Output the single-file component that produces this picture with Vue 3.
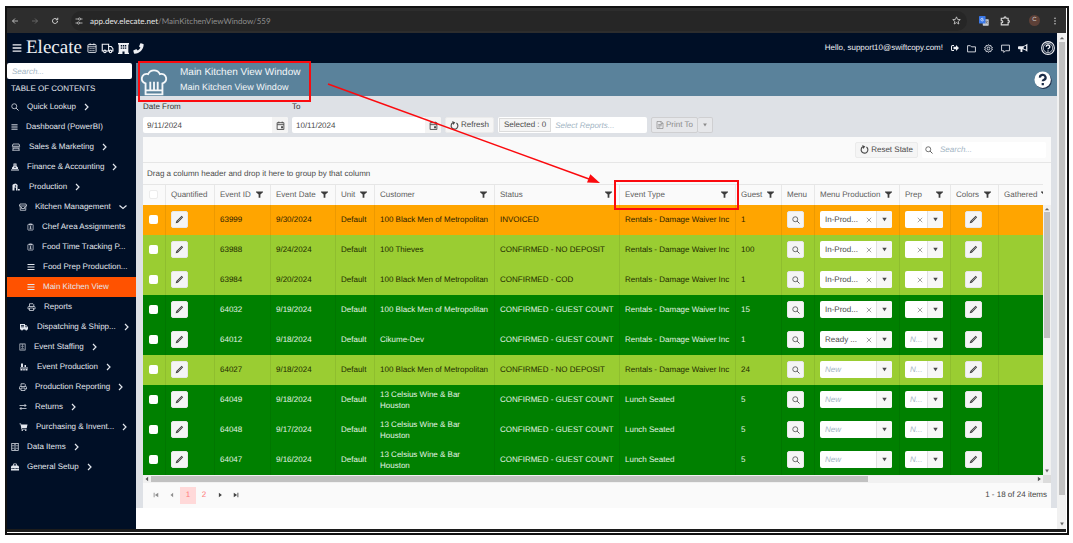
<script setup>
import { h } from 'vue'

const icons = {
  back: '<path d="M14 8H3M8 3L3 8l5 5"/>',
  forward: '<path d="M2 8h11M8 3l5 5-5 5"/>',
  reload: '<path d="M13 8a5 5 0 1 1-1.500-3.600M13.500 1.500v4h-4" stroke-width="2"/>',
  tune: '<path d="M1 4h5M12 4h3M1 12h3M10 12h5"/><circle cx="9" cy="4" r="2.200"/><circle cx="7" cy="12" r="2.200"/>',
  star: '<path d="M8 1.500l1.900 4.500 4.800.400-3.700 3.100 1.200 4.800L8 11.700l-4.200 2.600L5 9.500 1.300 6.400 6.100 6z" stroke-width="1.400"/>',
  translate: '<rect x="6" y="5" width="9.500" height="10.500" rx="1" fill="#c9cdd2" stroke="none"/><rect x="0" y="0" width="10.500" height="12" rx="1" fill="#3b78e7" stroke="none"/><path d="M7 5.500H5M7.200 6.500a2.200 2.200 0 1 1-.500-2.200" stroke="#fff" stroke-width="1"/><path d="M10 8.500h4M12 7.500v1M13.500 8.500c-.500 2-1.500 3-3 4M11 9.500c.600 1.400 1.500 2.200 3 3" stroke="#555" stroke-width=".8"/>',
  puzzle: '<path d="M2 3.500h4.500V3a1.600 1.600 0 0 1 3.200 0v.500H13V7h.400a1.600 1.600 0 0 1 0 3.200H13v4H2v-3.500h.800a1.600 1.600 0 0 0 0-3.400H2z" stroke-width="1.800"/>',
  dots: '<g fill="currentColor" stroke="none"><circle cx="8" cy="2.500" r="1.500"/><circle cx="8" cy="8" r="1.500"/><circle cx="8" cy="13.500" r="1.500"/></g>',
  bars: '<path d="M1 3h14M1 8h14M1 13h14" stroke-width="2.200"/>',
  calendar: '<rect x="1.500" y="2.500" width="13" height="12.500" rx="1"/><path d="M1.500 6h13M5 .500v3M11 .500v3M4 9h2M7 9h2M10 9h2M4 12h2M7 12h2M10 12h2" stroke-width="1.300"/>',
  van: '<path d="M3 12H1V3h8.500v9H6M9.500 6H13l2.200 3v3H14M9.500 12h1"/><circle cx="4.500" cy="12.500" r="1.600"/><circle cx="12" cy="12.500" r="1.600"/>',
  building: '<path fill="currentColor" stroke="none" fill-rule="evenodd" d="M0 0h16v2h-1v12h1v2H9.500v-3.500h-3V16H0v-2h1V2H0zM4 3v2h2V3zM7 3v2h2V3zM10 3v2h2V3zM4 6.500v2h2v-2zM7 6.500v2h2v-2zM10 6.500v2h2v-2z"/>',
  phone: '<path fill="currentColor" stroke="none" d="M11.500.500l3.400.900c.400.100.600.400.600.800C15.500 9.500 9.500 15.500 2.200 15.500c-.400 0-.700-.200-.800-.600l-.900-3.400c-.100-.400.100-.800.500-1l3.500-1.500c.400-.100.800 0 1 .300l1.400 1.700a11.500 11.500 0 0 0 4-4L9.200 5.600c-.300-.300-.400-.700-.300-1l1.600-3.600c.200-.400.600-.600 1-.500z"/>',
  logout: '<path fill="currentColor" stroke="none" d="M6 2H3a3 3 0 0 0-3 3v6a3 3 0 0 0 3 3h3v-2H3a1 1 0 0 1-1-1V5a1 1 0 0 1 1-1h3zM16 8l-6-6v3.500H5v5h5V14z"/>',
  folder: '<path d="M1 3h5l2 2h7v9H1z"/>',
  gear: '<circle cx="8" cy="8" r="2.500"/><path d="M8 1l1.500 2.200 2.600-.700.400 2.600 2.500 1.100L13.800 8l1.200 1.900-2.500 1.100-.400 2.600-2.600-.700L8 15l-1.500-2.100-2.600.700-.400-2.600L1 9.900 2.200 8 1 6.200l2.500-1.100.400-2.600 2.600.700z"/>',
  comment: '<path d="M1 2h14v10H8l-3 3v-3H1z"/>',
  horn: '<path fill="currentColor" stroke="none" fill-rule="evenodd" d="M15 1v13l-4-3-4-1v4.500H4V10H1.500A1.500 1.500 0 0 1 0 8.500v-2A1.500 1.500 0 0 1 1.500 5H7l4-1.200zM9 6v3l4 1.500V4.500z"/>',
  question: '<circle cx="8" cy="8" r="7.300" stroke-width="1.200"/><circle cx="8" cy="8" r="5.400" stroke-width=".9"/><path d="M6 6.600a2 2 0 1 1 2.700 1.800c-.500.200-.700.500-.700 1.100M8 10.800v1.200" stroke-width="1.700"/>',
  helpSolid: '<circle cx="8.500" cy="8.600" r="7.300" fill="#20304c" stroke="none"/><circle cx="7.700" cy="7.700" r="7.300" fill="#fff" stroke="none"/><path d="M5.300 5.900a2.500 2.300 0 1 1 3.500 2c-.800.300-1 .600-1 1.300M7.800 10.600v2" stroke="#1c2c47" stroke-width="2"/>',
  chef: '<path d="M3 8.500C1.300 8 .600 6.700.800 5.300 1.100 3.500 2.800 2.500 4.500 3 5.200 1.500 6.500.800 8 .800s2.800.700 3.500 2.200c1.700-.500 3.400.500 3.700 2.300.200 1.400-.500 2.700-2.200 3.200V15H3zM3 12.700h10M5.800 7.500v5M8 7.500v5M10.200 7.500v5" stroke-width="1.100"/>',
  search: '<circle cx="6.500" cy="6.500" r="5"/><path d="M10.200 10.200L15 15" stroke-width="1.800"/>',
  store: '<path d="M2 2h12l1.500 4.500H.500zM2 7v7.500M14 7v7.500M.500 14.500h15M2 10.500h12M6 7v3M10 7v3"/>',
  money: '<path fill="currentColor" stroke="none" d="M5 1h6v5l3 3v3H2V9l3-3zM0 13h16v2H0z"/><path d="M6.500 4h3M6 8.500h4" stroke="#000f26"/>',
  production: '<path fill="currentColor" stroke="none" d="M1 7a4 4 0 0 1 3-5 4 4 0 0 1 5 0 4 4 0 0 1 2 5v8H8V9H5v6H1zM12 12h3.500v3H12z"/><circle cx="7" cy="6" r="1.500" fill="#000f26" stroke="none"/>',
  shop: '<path d="M2 2h12l1.500 4H.500zM2.500 6v8.500h11V6M5 8v3h6V8"/>',
  clipboard: '<rect x="2" y="2" width="12" height="13" rx="1"/><path d="M5.500 1h5v2.500h-5zM8 6v6M5.500 12h5M6 8h4"/>',
  printer: '<path d="M4 7V1.500h7l1.500 1.500v4M3.500 12H1V8.500a1.500 1.500 0 0 1 1.500-1.500h11a1.500 1.500 0 0 1 1.500 1.500V12h-2.500M4 10h8v5H4z"/>',
  truck: '<path fill="currentColor" stroke="none" fill-rule="evenodd" d="M0 2h10v2.500h3l3 4V13h-1.500a2 2 0 0 1-4 0H6a2 2 0 0 1-4 0H0zM2 4v1.300h6V4zM2 7v1.300h6V7zM11 6v2.500h3L12.400 6z"/>',
  badge: '<rect x="2" y="1" width="12" height="14"/><circle cx="8" cy="7" r="1.600"/><path d="M5 12h6M6 3h4"/>',
  people: '<g fill="currentColor" stroke="none"><path d="M2 1h4v7H2zM9 4h3v4H9z"/><path d="M0 9h16v2H0zM1 12h4v3H1zM6.500 12h3v3h-3zM11 12h4v3h-4z"/></g>',
  swap: '<path d="M1 5h13M11 2l3 3-3 3M15 11H2M5 8l-3 3 3 3"/>',
  cart: '<path fill="currentColor" stroke="none" d="M0 1h3l.500 2H16l-1.500 7H5l.300 1.500H14V13H4L2 2.500H0z"/><circle cx="5.500" cy="14.300" r="1.500" fill="currentColor" stroke="none"/><circle cx="12.500" cy="14.300" r="1.500" fill="currentColor" stroke="none"/>',
  cabinet: '<rect x="1.500" y="1" width="13" height="14"/><path d="M1.500 5.500h13M1.500 10.500h13M6 3.300h4M6 8h4M6 12.800h4" stroke-width="1.200"/>',
  toolbox: '<path fill="currentColor" stroke="none" fill-rule="evenodd" d="M4 5V2.500L5.500 1h5L12 2.500V5h2l2 2.500V10H0V7.500L2 5zM5.500 5h5V2.500h-5zM0 11h3.500v1.200h1.500V11h6v1.200h1.500V11H16v4H0z"/>',
  right: '<path d="M2 2l6 6-6 6" stroke-width="2.400"/>',
  down: '<path d="M1 5l7 6 7-6" stroke-width="2.400"/>',
  picker: '<path d="M2 3h12v12H2zM2 6.500h12M5 1v3M11 1v3" stroke-width="1.600"/><path d="M9 9.500h3.500v3.500H9z" fill="currentColor" stroke="none"/>',
  refresh: '<path d="M11.500 3.500A6 6 0 1 1 5 3.200" stroke-width="2"/><path d="M4 0l5.500 2.500L5.500 7z" fill="currentColor" stroke="none"/>',
  report: '<path d="M2 1h8.500L14 4.500V15H2zM10 1v4h4M4.500 7h7M4.500 9.500h7M4.500 12h4" stroke-width="1.400"/>',
  caret: '<path d="M3 4h10l-5 8z" fill="currentColor" stroke="none"/>',
  filter: '<path d="M0 1h16v2l-6 5v7.500H6V8L0 3z" fill="currentColor" stroke="none"/>',
  pencil: '<path d="M1.200 14.800l1.200-4L11.800 1.500l2.700 2.700L5.200 13.600z" fill="currentColor" stroke="none"/><path d="M10 3l3 3M4.500 11.500L10.500 5.500" stroke="#f6f6f6" stroke-width=".8"/>',
  close: '<path d="M2 2l12 12M14 2L2 14" stroke-width="1.800"/>',
  triUp: '<path d="M2 11h12L8 5z" fill="currentColor" stroke="none"/>',
  triLeft: '<path d="M11 2v12L4 8z" fill="currentColor" stroke="none"/>',
  triRight: '<path d="M5 2v12l8-6z" fill="currentColor" stroke="none"/>',
  first: '<path d="M14 2v12L5 8z" fill="currentColor" stroke="none"/><path d="M3 2v12" stroke-width="2.400"/>',
  last: '<path d="M2 2v12l9-6z" fill="currentColor" stroke="none"/><path d="M13 2v12" stroke-width="2.400"/>',
}

const Icon = (props) =>
  h('svg', {
    width: props.size,
    height: props.tall || props.size,
    viewBox: '0 0 16 16',
    fill: 'none',
    stroke: 'currentColor',
    'stroke-width': 1.5,
    'aria-hidden': 'true',
    innerHTML: icons[props.name],
  })
Icon.props = ['name', 'size', 'tall']

const menu = [
  { text: 'Quick Lookup', icon: 'search', size: 8, level: 0, arrow: 'right' },
  { text: 'Dashboard (PowerBI)', icon: 'bars', size: 7, level: 0 },
  { text: 'Sales & Marketing', icon: 'store', size: 10, level: 0, arrow: 'right' },
  { text: 'Finance & Accounting', icon: 'money', size: 8, level: 0, arrow: 'right' },
  { text: 'Production', icon: 'production', size: 10, level: 0, arrow: 'right' },
  { text: 'Kitchen Management', icon: 'shop', size: 8, level: 1, arrow: 'down' },
  { text: 'Chef Area Assignments', icon: 'clipboard', size: 7, level: 2 },
  { text: 'Food Time Tracking P...', icon: 'clipboard', size: 7, level: 2 },
  { text: 'Food Prep Production...', icon: 'bars', size: 8, level: 2 },
  { text: 'Main Kitchen View', icon: 'bars', size: 8, level: 2, active: true },
  { text: 'Reports', icon: 'printer', size: 9, level: 2 },
  { text: 'Dispatching & Shipp...', icon: 'truck', size: 10, level: 1, arrow: 'right' },
  { text: 'Event Staffing', icon: 'badge', size: 7, level: 1, arrow: 'right' },
  { text: 'Event Production', icon: 'people', size: 10, level: 1, arrow: 'right' },
  { text: 'Production Reporting', icon: 'printer', size: 8, level: 1, arrow: 'right' },
  { text: 'Returns', icon: 'swap', size: 8, level: 1, arrow: 'right' },
  { text: 'Purchasing & Invent...', icon: 'cart', size: 9, level: 1, arrow: 'right' },
  { text: 'Data Items', icon: 'cabinet', size: 8, level: 0, arrow: 'right' },
  { text: 'General Setup', icon: 'toolbox', size: 8, level: 0, arrow: 'right' },
]

const columns = [
  { key: 'check', title: '' },
  { key: 'quantified', title: 'Quantified' },
  { key: 'id', title: 'Event ID', filter: true },
  { key: 'date', title: 'Event Date', filter: true },
  { key: 'unit', title: 'Unit', filter: true },
  { key: 'customer', title: 'Customer', filter: true },
  { key: 'status', title: 'Status', filter: true },
  { key: 'type', title: 'Event Type', filter: true },
  { key: 'guest', title: 'Guest', filter: true },
  { key: 'menu', title: 'Menu' },
  { key: 'mprod', title: 'Menu Production', filter: true },
  { key: 'prep', title: 'Prep', filter: true },
  { key: 'colors', title: 'Colors', filter: true },
  { key: 'gathered', title: 'Gathered', filter: true },
]

const metro = '100 Black Men of Metropolitan'
const houston = '13 Celsius Wine & Bar\nHouston'
const waiver = 'Rentals - Damage Waiver Inc'
const guestCount = 'CONFIRMED - GUEST COUNT'
const rows = [
  { tone: 'orange', id: '63999', date: '9/30/2024', customer: metro, status: 'INVOICED', type: waiver, guest: 1, mprod: 'In-Prod...', prep: '' },
  { tone: 'lime', id: '63988', date: '9/24/2024', customer: '100 Thieves', status: 'CONFIRMED - NO DEPOSIT', type: waiver, guest: 100, mprod: 'In-Prod...', prep: '' },
  { tone: 'lime', id: '63984', date: '9/20/2024', customer: metro, status: 'CONFIRMED - COD', type: waiver, guest: 1, mprod: 'In-Prod...', prep: '' },
  { tone: 'green', id: '64032', date: '9/19/2024', customer: metro, status: guestCount, type: waiver, guest: 15, mprod: 'In-Prod...', prep: '' },
  { tone: 'green', id: '64012', date: '9/18/2024', customer: 'Cikume-Dev', status: guestCount, type: waiver, guest: 1, mprod: 'Ready ...', prep: null },
  { tone: 'lime', id: '64027', date: '9/18/2024', customer: metro, status: 'CONFIRMED - NO DEPOSIT', type: waiver, guest: 24, mprod: null, prep: null },
  { tone: 'green', id: '64049', date: '9/18/2024', customer: houston, status: guestCount, type: 'Lunch Seated', guest: 5, mprod: null, prep: null },
  { tone: 'green', id: '64048', date: '9/17/2024', customer: houston, status: guestCount, type: 'Lunch Seated', guest: 5, mprod: null, prep: null },
  { tone: 'green', id: '64047', date: '9/16/2024', customer: houston, status: guestCount, type: 'Lunch Seated', guest: 5, mprod: null, prep: null },
]
</script>

<template>
  <div class="page">
    <div class="frame">
      <div class="chrome">
        <button class="ghost" aria-label="Back"><Icon name="back" size="8" /></button>
        <button class="ghost dim" aria-label="Forward"><Icon name="forward" size="8" /></button>
        <button class="ghost" aria-label="Reload"><Icon name="reload" size="8" /></button>
        <div class="address">
          <Icon name="tune" size="8" />
          <span class="url"><b>app.dev.elecate.net</b>/MainKitchenViewWindow/559</span>
          <button class="ghost" aria-label="Bookmark"><Icon name="star" size="9" /></button>
        </div>
        <div class="chrome-tools">
          <button class="ghost" aria-label="Translate"><Icon name="translate" size="10" /></button>
          <button class="ghost" aria-label="Extensions"><Icon name="puzzle" size="10" /></button>
          <span class="avatar">C</span>
          <button class="ghost" aria-label="Menu"><Icon name="dots" size="8" /></button>
        </div>
      </div>

      <div class="window">
        <div class="app">
          <header class="topbar">
            <button class="ghost" aria-label="Toggle menu"><Icon name="bars" size="10" /></button>
            <span class="logo">Elecate</span>
            <div class="shortcuts">
              <button class="ghost" aria-label="Calendar"><Icon name="calendar" size="10" /></button>
              <button class="ghost" aria-label="Deliveries"><Icon name="van" size="13" tall="12" /></button>
              <button class="ghost" aria-label="Venue"><Icon name="building" size="11" /></button>
              <button class="ghost" aria-label="Call"><Icon name="phone" size="11" /></button>
            </div>
            <div class="account">
              <span>Hello, support10@swiftcopy.com!</span>
              <button class="ghost" aria-label="Log out"><Icon name="logout" size="8" /></button>
              <button class="ghost" aria-label="Files"><Icon name="folder" size="9" /></button>
              <button class="ghost" aria-label="Settings"><Icon name="gear" size="9" /></button>
              <button class="ghost" aria-label="Messages"><Icon name="comment" size="9" /></button>
              <button class="ghost" aria-label="Announcements"><Icon name="horn" size="10" /></button>
              <button class="ghost about" aria-label="About"><Icon name="question" size="14" /></button>
            </div>
          </header>

          <div class="body">
            <nav class="sidebar">
              <input class="side-search" type="text" placeholder="Search..." aria-label="Search menu" />
              <h2>TABLE OF CONTENTS</h2>
              <ul>
                <li v-for="item in menu" :key="item.text">
                  <a href="#" :class="['level' + item.level, { active: item.active }]">
                    <Icon :name="item.icon" :size="item.size" tall="8" />
                    <span>{{ item.text }}</span>
                    <Icon v-if="item.arrow" :name="item.arrow" size="8" />
                  </a>
                </li>
              </ul>
            </nav>

            <main>
              <div class="title">
                <Icon class="hat" name="chef" size="28" tall="27" />
                <div class="title-text">
                  <h1>Main Kitchen View Window</h1>
                  <p>Main Kitchen View Window</p>
                </div>
                <button class="ghost" aria-label="Help"><Icon name="helpSolid" size="18" /></button>
              </div>

              <div class="content">
                <div class="filters">
                  <div class="field">
                    <label for="from">Date From</label>
                    <div class="box">
                      <input id="from" type="text" value="9/11/2024" />
                      <button aria-label="Pick start date"><Icon name="picker" size="9" /></button>
                    </div>
                  </div>
                  <div class="field to">
                    <label for="to">To</label>
                    <div class="box">
                      <input id="to" type="text" value="10/11/2024" />
                      <button aria-label="Pick end date"><Icon name="picker" size="9" /></button>
                    </div>
                  </div>
                  <button class="btn refresh"><Icon name="refresh" size="9" />Refresh</button>
                  <div class="box reports">
                    <span class="chip">Selected : 0</span>
                    <input type="text" placeholder="Select Reports..." aria-label="Select reports" />
                  </div>
                  <div class="split">
                    <button class="btn" disabled><Icon name="report" size="8" />Print To</button>
                    <button class="btn" disabled aria-label="Print options"><Icon name="caret" size="6" /></button>
                  </div>
                </div>

                <section class="grid">
                  <div class="grid-tools">
                    <button class="btn"><Icon name="refresh" size="9" />Reset State</button>
                    <div class="box grid-search">
                      <Icon name="search" size="8" />
                      <input type="text" placeholder="Search..." aria-label="Search events" />
                    </div>
                  </div>
                  <p class="group">Drag a column header and drop it here to group by that column</p>
                  <div class="rows">
                    <table>
                      <colgroup>
                        <col v-for="c in columns" :key="c.key" :class="'w-' + c.key" />
                      </colgroup>
                      <thead>
                        <tr>
                          <th v-for="c in columns" :key="c.key" scope="col">
                            <input v-if="c.key === 'check'" type="checkbox" aria-label="Select all" />
                            <div v-else class="head">
                              <span>{{ c.title }}</span>
                              <Icon v-if="c.filter" name="filter" size="7" />
                            </div>
                          </th>
                        </tr>
                      </thead>
                      <tbody>
                        <tr v-for="r in rows" :key="r.id" :class="r.tone">
                          <td><input type="checkbox" :aria-label="'Select event ' + r.id" /></td>
                          <td><button class="square" aria-label="Edit quantities"><Icon name="pencil" size="9" /></button></td>
                          <td>{{ r.id }}</td>
                          <td>{{ r.date }}</td>
                          <td>Default</td>
                          <td>{{ r.customer }}</td>
                          <td>{{ r.status }}</td>
                          <td>{{ r.type }}</td>
                          <td>{{ r.guest }}</td>
                          <td><button class="square" aria-label="View menu"><Icon name="search" size="8" /></button></td>
                          <td v-for="k in ['mprod', 'prep']" :key="k">
                            <div :class="['combo', { empty: r[k] === null }]">
                              <select :aria-label="k === 'prep' ? 'Prep' : 'Menu production'">
                                <option>{{ r[k] === null ? (k === 'prep' ? 'N...' : 'New') : r[k] }}</option>
                              </select>
                              <button v-if="r[k] !== null" class="clear" aria-label="Clear"><Icon name="close" size="6" /></button>
                              <span class="drop"><Icon name="caret" size="7" /></span>
                            </div>
                          </td>
                          <td class="mid"><button class="square" aria-label="Edit colors"><Icon name="pencil" size="9" /></button></td>
                          <td></td>
                        </tr>
                      </tbody>
                    </table>
                    <div class="vscroll inner">
                      <Icon name="triUp" size="6" />
                      <div class="thumb"></div>
                      <Icon name="caret" size="6" />
                    </div>
                  </div>
                  <div class="hscroll">
                    <Icon name="triLeft" size="6" />
                    <div class="hthumb"></div>
                    <Icon name="triRight" size="6" />
                    <span class="corner"></span>
                  </div>
                  <div class="pager">
                    <button class="off" aria-label="First page"><Icon name="first" size="6" /></button>
                    <button class="off" aria-label="Previous page"><Icon name="triLeft" size="6" /></button>
                    <button class="num current">1</button>
                    <button class="num">2</button>
                    <button aria-label="Next page"><Icon name="triRight" size="6" /></button>
                    <button aria-label="Last page"><Icon name="last" size="6" /></button>
                    <span class="count">1 - 18 of 24 items</span>
                  </div>
                </section>
              </div>
            </main>
          </div>
        </div>
        <div class="vscroll outer">
          <Icon name="triUp" size="6" />
          <div class="thumb"></div>
          <Icon name="caret" size="6" />
        </div>
      </div>
      <div class="taskbar"></div>
    </div>

    <svg class="notes" width="610" height="155" viewBox="0 0 610 155" aria-hidden="true">
      <g fill="none" stroke="#fb0a0e" stroke-width="2">
        <rect x="2" y="2" width="171" height="39" />
        <rect x="478" y="121" width="123" height="28" />
        <path d="M191 24L452 119" stroke-width="1.500" />
      </g>
      <path d="M463 123l-13-.5 3.300-8.300z" fill="#fb0a0e" />
    </svg>
  </div>
</template>

<style>
body {
  background: #fff;
}
</style>

<style scoped>
.page {
  position: relative;
  padding: 6px 4px 8px 5px;
  font: 8px/12px "Liberation Sans", Arial, sans-serif;
  text-rendering: geometricPrecision;
  color: #4a4a4a;
}
.page * {
  box-sizing: border-box;
}
svg {
  display: block;
  flex: none;
}
button,
input,
select {
  font: inherit;
  color: inherit;
  text-rendering: inherit;
  margin: 0;
  padding: 0;
  border: 0;
  background: none;
  min-width: 0;
}
input:focus,
select:focus {
  outline: none;
}
h1,
h2,
p,
ul {
  margin: 0;
  padding: 0;
  font-weight: normal;
}
.frame {
  border: 2px solid #111;
  padding: 0 1px 1px 0;
  background: #fff;
}
.chrome {
  display: flex;
  align-items: center;
  height: 25px;
  padding: 0 7px 0 4px;
  gap: 12px;
  background: #2d2d2d;
  color: #d9d9d9;
}
.chrome .dim {
  color: #777;
}
.address {
  flex: 1;
  display: flex;
  align-items: center;
  gap: 7px;
  height: 20px;
  padding: 0 6px 0 4px;
  border-radius: 10px;
  background: #262626;
}
.url {
  flex: 1;
  font: 8px/12px Lato, "Open Sans", sans-serif;
  color: #8d8d8d;
}
.url b {
  font-weight: 500;
  color: #dedede;
}
.chrome-tools {
  display: flex;
  align-items: center;
  gap: 11px;
}
.avatar {
  width: 11px;
  margin-left: 8px;
  border-radius: 50%;
  background: #5d4037;
  font-size: 6px;
  line-height: 11px;
  text-align: center;
}
.window {
  display: flex;
}
.app {
  flex: 1;
  min-width: 0;
  display: flex;
  flex-direction: column;
}
.topbar {
  display: flex;
  align-items: center;
  height: 30px;
  padding: 0 2px 0 5px;
  gap: 4px;
  background: #000f26;
  color: #eef0f4;
}
.logo {
  font: 19px/24px "Liberation Serif", "Times New Roman", serif;
}
.shortcuts {
  display: flex;
  align-items: center;
  gap: 4px;
  margin-left: 1px;
}
.account {
  display: flex;
  align-items: center;
  gap: 8px;
  margin-left: auto;
}
.account .about {
  margin-left: 5px;
}
.body {
  flex: 1;
  display: flex;
}
.sidebar {
  width: 129px;
  flex: none;
  background: #000f26;
  color: #e3e7ee;
}
.side-search {
  display: block;
  width: 125px;
  height: 16px;
  padding: 0 5px;
  border-radius: 2px;
  background: #fff;
}
::placeholder {
  color: #a3b5c4;
  font-style: italic;
  opacity: 1;
}
.sidebar h2 {
  padding: 4px 4px 2px;
  font-size: 8px;
  line-height: 12px;
}
.sidebar ul {
  list-style: none;
}
.sidebar a {
  display: flex;
  align-items: center;
  gap: 8px;
  height: 20px;
  color: inherit;
  text-decoration: none;
  white-space: nowrap;
}
.level0 {
  padding-left: 4px;
}
.level1 {
  padding-left: 12px;
}
.level2 {
  padding-left: 20px;
}
.sidebar .active {
  background: #ff5200;
}
main {
  flex: 1;
  min-width: 0;
  background: #fff;
  padding-bottom: 21px;
}
.title {
  display: flex;
  align-items: center;
  height: 33px;
  padding: 0 5px 0 4px;
  gap: 12px;
  background: #5a829b;
  color: #f4f7f9;
}
.hat {
  align-self: flex-end;
}
.title-text {
  flex: 1;
}
.title h1 {
  font-size: 10px;
  line-height: 14px;
}
.title p {
  font-size: 9px;
  line-height: 14px;
}
.content {
  padding: 5px 6px 0 7px;
  background: #dee1e6;
}
.filters {
  display: flex;
  align-items: flex-end;
  gap: 4px;
  padding-bottom: 4px;
}
.field {
  width: 145px;
}
.field.to {
  width: 149px;
}
.field label {
  display: block;
  margin-bottom: 4px;
  color: #333;
}
.box {
  display: flex;
  align-items: center;
  height: 16px;
  border-radius: 2px;
  background: #fff;
  overflow: hidden;
}
.box input {
  flex: 1;
  height: 16px;
  padding: 0 4px;
}
.field button {
  display: grid;
  place-items: center;
  width: 16px;
  height: 16px;
  background: #f4f4f4;
}
.btn {
  display: flex;
  align-items: center;
  gap: 2px;
  height: 16px;
  padding: 0 4px;
  border: 1px solid #ebebeb;
  border-radius: 2px;
  background: #f5f5f5;
  white-space: nowrap;
}
.reports {
  width: 149px;
}
.chip {
  padding: 0 4px;
  margin-left: 1px;
  border: 1px solid #dcdcdc;
  background: #f5f5f5;
  white-space: nowrap;
}
.split {
  display: flex;
  color: #8b8b8b;
}
.split .btn {
  border-color: #cfcfd1;
  background: #e6e7ea;
}
.split .btn:last-child {
  border-left: 0;
}
.grid {
  background: #fafafa;
}
.grid-tools {
  display: flex;
  align-items: center;
  justify-content: flex-end;
  gap: 4px;
  height: 26px;
  padding: 0 5px 0 0;
  border-bottom: 1px solid #e6e6e6;
}
.grid-search {
  width: 124px;
  padding-left: 3px;
}
.grid-search input {
  padding-left: 7px;
}
.group {
  padding: 5px 4px 4px;
}
.rows {
  display: flex;
}
table {
  flex: 1;
  width: 100%;
  table-layout: fixed;
  border-collapse: collapse;
}
.w-check { width: 22px; }
.w-quantified { width: 49px; }
.w-id { width: 56px; }
.w-date { width: 65px; }
.w-unit { width: 39px; }
.w-status { width: 125px; }
.w-type { width: 116px; }
.w-guest { width: 46px; }
.w-menu { width: 33px; }
.w-mprod { width: 85px; }
.w-prep { width: 51px; }
.w-colors { width: 48px; }
.w-gathered { width: 45px; }
th,
td {
  padding: 0 7px 0 6px;
  text-align: left;
  box-shadow: inset 1px 0 rgba(0, 0, 0, 0.07);
}
th:first-child,
td:first-child {
  box-shadow: none;
}
th {
  height: 20px;
  border-top: 1px solid #e6e6e6;
  font-weight: normal;
  white-space: nowrap;
  overflow: hidden;
  color: #5c5c5c;
}
.head {
  display: flex;
  align-items: center;
  justify-content: space-between;
  gap: 4px;
}
.head svg {
  color: #3c3c3c;
}
td {
  height: 30px;
  line-height: 11px;
  white-space: pre;
}
.orange {
  background: #ffa500;
  color: #2c1c00;
}
.lime {
  background: #9acd32;
  color: #1d2a00;
}
.green {
  background: #008000;
  color: #e4f2e4;
}
input[type="checkbox"] {
  display: block;
  appearance: none;
  width: 9px;
  height: 9px;
  border-radius: 2px;
  background: #fff;
}
th input[type="checkbox"] {
  border: 1px solid #ececec;
}
.square {
  display: grid;
  place-items: center;
  width: 17px;
  height: 17px;
  border: 1px solid #e8e8e8;
  border-radius: 2px;
  background: #f5f5f5;
  color: #444;
}
.mid .square {
  margin: 0 auto;
}
.combo {
  display: flex;
  align-items: center;
  height: 17px;
  border-radius: 2px;
  background: #fff;
  color: #4a4a4a;
  overflow: hidden;
}
.combo select {
  flex: 1;
  appearance: none;
  height: 17px;
  padding-left: 5px;
}
.combo.empty select {
  color: #a3b5c4;
  font-style: italic;
}
.clear {
  margin-right: 4px;
  color: #777;
}
.drop {
  display: grid;
  place-items: center;
  width: 16px;
  height: 17px;
  border-left: 1px solid #e0e0e0;
  background: #f7f7f7;
}
.vscroll {
  display: flex;
  flex-direction: column;
  align-items: center;
  width: 8px;
  background: #f1f1f1;
  color: #666;
}
.vscroll .thumb {
  width: 6px;
  background: #c1c1c1;
}
.vscroll svg:last-child {
  margin-top: auto;
}
.inner {
  margin-top: 21px;
  padding: 1px 0;
}
.inner .thumb {
  height: 126px;
}
.outer {
  padding: 2px 0;
  width: 9px;
}
.outer .thumb {
  flex: 1;
  margin: 1px 0 26px;
}
.hscroll {
  display: flex;
  align-items: center;
  height: 8px;
  padding-left: 1px;
  gap: 1px;
  background: #f1f1f1;
  color: #555;
}
.hthumb {
  width: 79%;
  height: 6px;
  margin-right: auto;
  background: #c1c1c1;
}
.corner {
  width: 8px;
  height: 8px;
  background: #dcdcdc;
}
.pager {
  display: flex;
  align-items: center;
  height: 25px;
  padding: 0 4px 0 5px;
  color: #444;
}
.pager button {
  display: grid;
  place-items: center;
  width: 16px;
  height: 17px;
}
.pager .off {
  color: #8e8e8e;
}
.pager .num {
  color: #ff7b7b;
}
.pager .current {
  background: #ffd9d9;
}
.count {
  margin-left: auto;
}
.taskbar {
  height: 3px;
  background: #1c1c1c;
}
.ghost {
  display: block;
}
.notes {
  position: absolute;
  left: 137px;
  top: 60px;
}
</style>
